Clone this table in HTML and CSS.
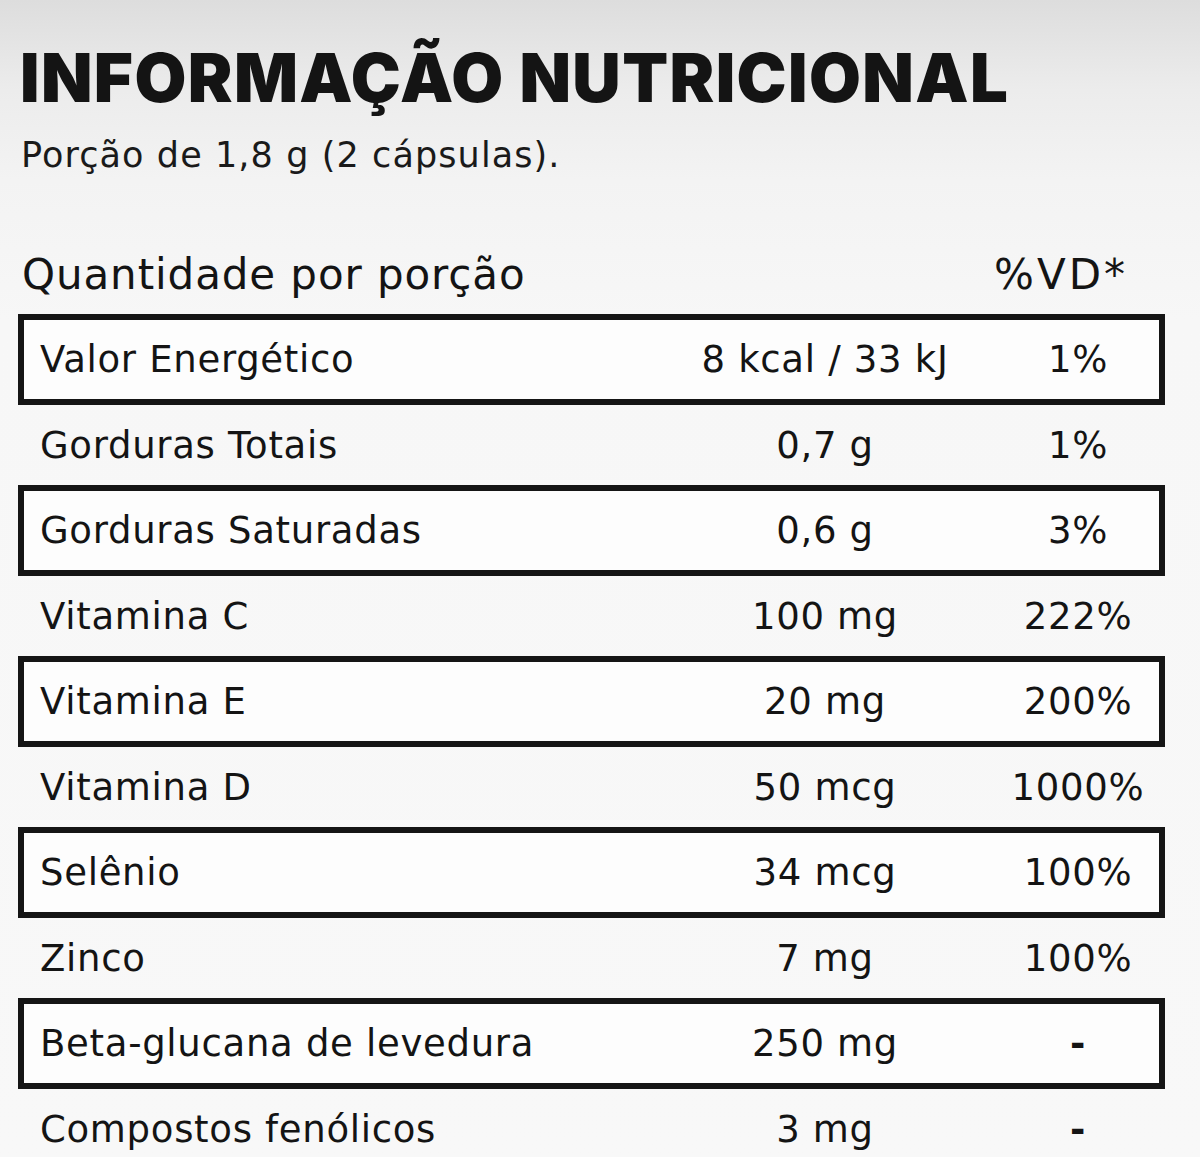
FILE: index.html
```html
<!DOCTYPE html>
<html lang="pt-BR">
<head>
<meta charset="utf-8">
<title>Informação Nutricional</title>
<link rel="stylesheet" href="styles.css">
</head>
<body>
<main class="page">
  <h1 class="title">INFORMAÇÃO NUTRICIONAL</h1>
  <p class="serving">Porção de 1,8 g (2 cápsulas).</p>

  <div class="table">
    <div class="head">
      <span class="head-name">Quantidade por porção</span>
      <span class="head-vd">%VD*</span>
    </div>

    <div class="row boxed"><span class="name">Valor Energético</span><span class="amount">8 kcal / 33 kJ</span><span class="vd">1%</span></div>
    <div class="row"><span class="name">Gorduras Totais</span><span class="amount">0,7 g</span><span class="vd">1%</span></div>
    <div class="row boxed"><span class="name">Gorduras Saturadas</span><span class="amount">0,6 g</span><span class="vd">3%</span></div>
    <div class="row"><span class="name">Vitamina C</span><span class="amount">100 mg</span><span class="vd">222%</span></div>
    <div class="row boxed"><span class="name">Vitamina E</span><span class="amount">20 mg</span><span class="vd">200%</span></div>
    <div class="row"><span class="name">Vitamina D</span><span class="amount">50 mcg</span><span class="vd">1000%</span></div>
    <div class="row boxed"><span class="name">Selênio</span><span class="amount">34 mcg</span><span class="vd">100%</span></div>
    <div class="row"><span class="name">Zinco</span><span class="amount">7 mg</span><span class="vd">100%</span></div>
    <div class="row boxed"><span class="name">Beta-glucana de levedura</span><span class="amount">250 mg</span><span class="vd dash">-</span></div>
    <div class="row"><span class="name">Compostos fenólicos</span><span class="amount">3 mg</span><span class="vd dash">-</span></div>
  </div>
</main>
</body>
</html>
```

FILE: styles.css
```css
* {
  box-sizing: border-box;
}

html, body {
  margin: 0;
  padding: 0;
}

body {
  background: linear-gradient(180deg, #dddddd 0px, #ececec 90px, #f3f3f3 180px, #f7f7f7 320px, #f8f8f8 100%);
  color: #141414;
  font-family: "DejaVu Sans", "Liberation Sans", sans-serif;
  min-height: 1157px;
}

.page {
  padding: 44px 35px 0 18px;
}

.title {
  margin: 0 0 0 2px;
  font-family: "Inter", "DejaVu Sans", sans-serif;
  font-weight: 900;
  font-size: 67px;
  line-height: 67px;
  letter-spacing: 1.4px;
  color: #141414;
}

.serving {
  margin: 27px 0 0 3px;
  font-size: 35px;
  line-height: 35px;
  letter-spacing: 1.1px;
  color: #1a1a1a;
}

.table {
  margin-top: 81px;
}

.head {
  display: flex;
  justify-content: space-between;
  align-items: baseline;
  padding: 0 37px 0 4px;
  font-size: 42px;
  line-height: 42px;
  height: 42px;
  margin-bottom: 18px;
}

.head-name {
  letter-spacing: 0.9px;
}

.head-vd {
  letter-spacing: 3px;
}

.row {
  display: grid;
  grid-template-columns: 1fr 250px 162px;
  column-gap: 47px;
  align-items: center;
  height: 80px;
  border-style: solid;
  border-color: transparent;
  border-width: 0 6px;
  font-size: 37px;
  line-height: 37px;
  letter-spacing: 0.7px;
}

.row.boxed {
  height: 91px;
  border: 6px solid #151515;
  background: #fdfdfd;
}

.name {
  padding-left: 16px;
  white-space: nowrap;
}

.amount,
.vd {
  text-align: center;
  white-space: nowrap;
}

.dash {
  font-weight: 700;
}
```
